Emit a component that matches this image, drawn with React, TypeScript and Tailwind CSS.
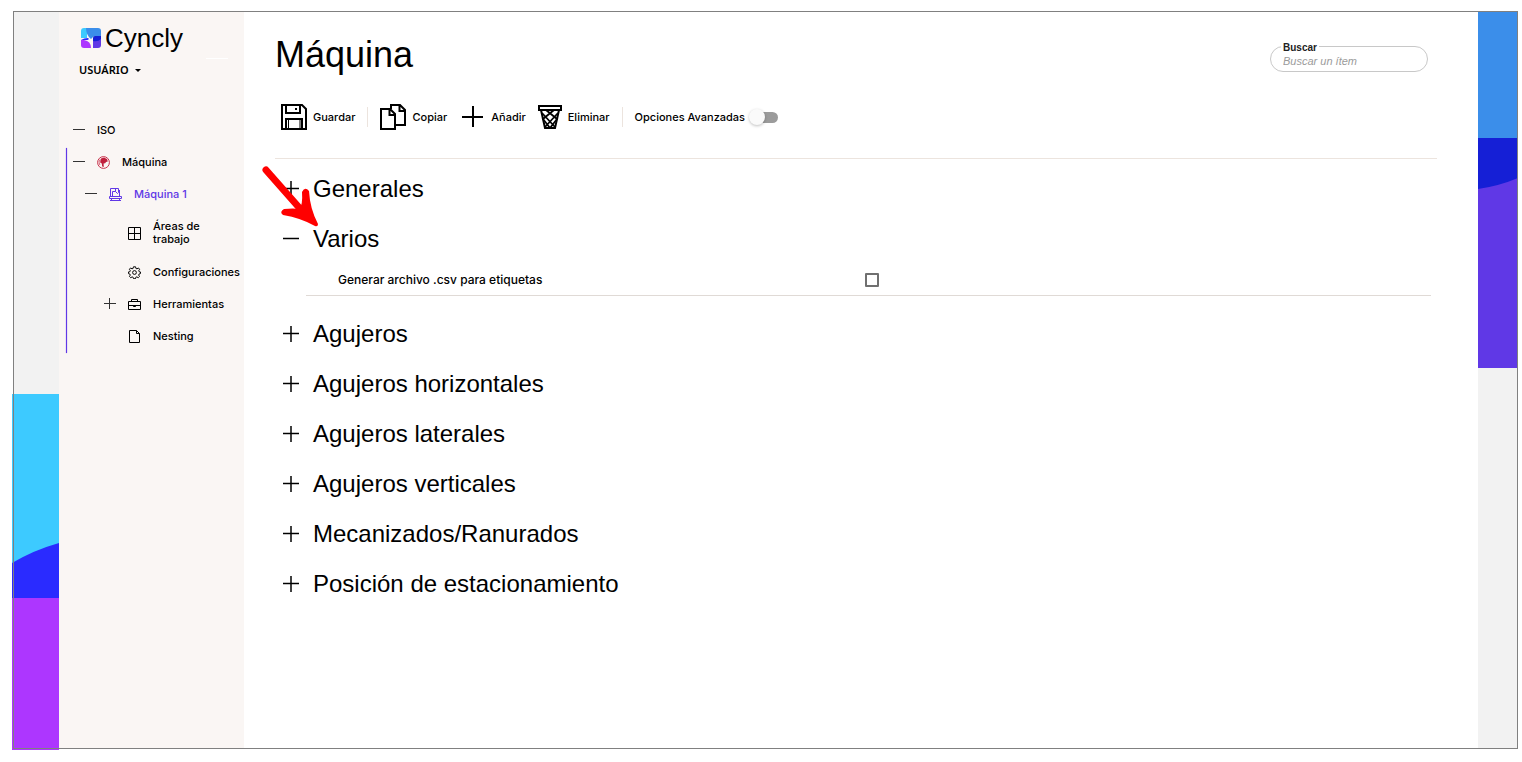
import type { ReactNode } from 'react'

const sections = [
  'Agujeros',
  'Agujeros horizontales',
  'Agujeros laterales',
  'Agujeros verticales',
  'Mecanizados/Ranurados',
  'Posición de estacionamiento',
]

function Toggle({ open, className = '' }: { open?: boolean; className?: string }) {
  return (
    <svg viewBox="0 0 12 12" className={`shrink-0 ${className}`} fill="none" stroke="currentColor" aria-hidden="true">
      <path d="M0 5.5h12" />
      {!open && <path d="M5.5 0v11" />}
    </svg>
  )
}

function LogoMark() {
  return (
    <svg viewBox="0 0 20 20" className="size-5" aria-hidden="true">
      <path d="M3 0h3v10H0V3q0-3 3-3z" fill="#3dcaff" />
      <path d="M5 0h12q3 0 3 3v5h-5q-3 0-5 3Q5 7 5 0z" fill="#3b8eea" />
      <path d="M0 12q3-2 7-2l1 1-1 1z" fill="#2a2bff" />
      <path d="M0 12h3q7 1 7 8H3q-3 0-3-3z" fill="#ad36ff" />
      <path d="M12 11h8v6q0 3-3 3h-5z" fill="#6038e6" />
      <path d="M14 8h6v3q-3 3-8 2v-3q0-2 2-2z" fill="#151fd6" />
      <path d="M6 12l6-1v7q-2-4-6-6z" fill="#faf6f4" />
    </svg>
  )
}

function MachineTypeIcon() {
  return (
    <svg viewBox="0 0 13 13" className="size-[13px] shrink-0" aria-hidden="true">
      <circle cx="6.5" cy="6.5" r="5.9" fill="none" stroke="#c8304a" />
      <path d="M4 2.5l3-1 3 1.6.8 2.4-1.8.4-.8 1.4-1.6.3.2 3.4-1.600-.5-.4-3-1.600-.9.2-2.200z" fill="#c01f3c" />
      <path d="M3 3.500L2 6l.8 3" fill="none" stroke="#c8304a" strokeWidth=".7" />
    </svg>
  )
}

function CncIcon() {
  return (
    <svg viewBox="0 0 13 13" className="size-[13px] shrink-0" fill="none" stroke="currentColor" aria-hidden="true">
      <path d="M1.5 8.5v-8h8v4l-1 1-2-2v-3M3.5 8.500v-5h3M10.500 2v6" />
      <path d="M.5 8.500h12v2H.5zM1 12.500h11M2.500 10.500v2M10.500 10.500v2" />
    </svg>
  )
}

function GridIcon() {
  return (
    <svg viewBox="0 0 13 13" className="size-[13px] shrink-0" fill="none" stroke="currentColor" aria-hidden="true">
      <path d="M.5.5h12v12H.5zM6.5.5v12M.5 6.5h12" />
    </svg>
  )
}

function GearIcon() {
  return (
    <svg viewBox="0 0 24 24" className="size-[13px] shrink-0" fill="none" stroke="currentColor" strokeWidth="1.8" aria-hidden="true">
      <path d="M10 1.5h4l.6 3 2 .8 2.600-1.700 2.200 2.400-1.500 2.600.8 2 2.300.4v3l-2.500.8-.8 2 1.500 2.500-2.300 2.300-2.600-1.500-1.900.8-.6 2.600h-3.600l-.7-2.600-1.900-.8-2.600 1.500-2.300-2.300 1.500-2.500-.8-2-2.600-.8v-3l2.600-.4.8-2L2.600 6l2.200-2.400 2.600 1.700 2-.8z" />
      <circle cx="12" cy="12" r="3.5" />
    </svg>
  )
}

function ToolboxIcon() {
  return (
    <svg viewBox="0 0 13 13" className="size-[13px] shrink-0" fill="none" stroke="currentColor" aria-hidden="true">
      <path d="M.5 3.5h12v8H.5zM3.5 3.500v-2h6v2M.5 7.500h12" />
      <path d="M5.500 7.500h2v1h-2z" fill="currentColor" />
    </svg>
  )
}

function PageIcon() {
  return (
    <svg viewBox="0 0 13 13" className="size-[13px] shrink-0" fill="none" stroke="currentColor" aria-hidden="true">
      <path d="M1.500.5h7l3 3v9h-10zM8.500.5v3h3" />
    </svg>
  )
}

function SaveIcon() {
  return (
    <svg viewBox="0 0 26 26" className="size-[26px]" fill="none" stroke="currentColor" strokeWidth="2" aria-hidden="true">
      <path d="M1 1h20l4 4v20H1zM5 1v8h14V1M5 25V15h16v10" />
      <path d="M7.500 16v9M19 16v9" strokeWidth="1" />
      <path d="M14 4h2v2h-2z" fill="currentColor" stroke="none" />
    </svg>
  )
}

function CopyIcon() {
  return (
    <svg viewBox="0 0 26 26" className="size-[26px]" fill="none" stroke="currentColor" strokeWidth="2" aria-hidden="true">
      <path d="M1 5h9l5 5v15H1zM9.500 5v6H15" />
      <path d="M11 5V1h9l5 5v15h-9.500M19.500 1v6H25" />
    </svg>
  )
}

function PlusIcon() {
  return (
    <svg viewBox="0 0 24 24" className="size-6" fill="none" stroke="currentColor" strokeWidth="2" aria-hidden="true">
      <path d="M1 12h21M12 1v21" />
    </svg>
  )
}

function TrashIcon() {
  return (
    <svg viewBox="0 0 24 24" className="size-6" fill="none" stroke="currentColor" strokeWidth="2" aria-hidden="true">
      <path d="M1 1h22v4H1zM3 5l4 18h10l4-18" />
      <path d="M8 5l11 9-7 9M16 5L5 14l7 9M4 8l13 14M20 8L7 22" strokeWidth="1.8" />
    </svg>
  )
}

type TreeRowProps = {
  label: string
  indent: string
  icon?: ReactNode
  toggle?: 'open' | 'closed'
  active?: boolean
  tall?: boolean
}

function TreeRow({ label, indent, icon, toggle, active, tall }: TreeRowProps) {
  return (
    <li className={`flex items-center gap-3 ${indent} ${tall ? 'h-[46px]' : 'h-8'} ${active ? 'text-[#6038e6]' : 'text-black'}`}>
      {toggle ? (
        <button type="button" aria-label={`Alternar ${label}`} className="text-[#333]">
          <Toggle open={toggle === 'open'} className="size-3" />
        </button>
      ) : (
        <span className="w-3 shrink-0" />
      )}
      {icon}
      <a href="#" className={`text-[11px] leading-[13px] font-medium ${tall ? 'w-16' : ''}`}>{label}</a>
    </li>
  )
}

function ToolButton({ icon, children }: { icon: ReactNode; children: ReactNode }) {
  return (
    <button type="button" className="flex items-center gap-1.5 text-[11px] font-medium">
      {icon}
      <span>{children}</span>
    </button>
  )
}

function SectionHeader({ title, open }: { title: string; open?: boolean }) {
  return (
    <h2 className="h-[50px]">
      <button type="button" aria-expanded={!!open} className="flex h-full items-center gap-3.5 pl-2 font-['Liberation_Sans',sans-serif] text-2xl">
        <svg viewBox="0 0 16 16" className="size-4" fill="none" stroke="currentColor" strokeWidth="1.5" aria-hidden="true">
          <path d="M0 7.500h16" />
          {!open && <path d="M8 0v16" />}
        </svg>
        {title}
      </button>
    </h2>
  )
}

function Sidebar() {
  return (
    <aside className="w-[185px] shrink-0 bg-[#faf6f4] pt-[13px]">
      <div className="flex items-center gap-1 pl-[22px]">
        <LogoMark />
        <span className="font-['Liberation_Sans',sans-serif] text-[26px] leading-7">Cyncly</span>
      </div>
      <button type="button" className="mt-2 ml-5 flex items-center gap-1.5 font-['Noto_Sans',sans-serif] text-[11px] leading-5 font-semibold">
        USUÁRIO
        <svg viewBox="0 0 6 3" className="h-[3px] w-1.5" aria-hidden="true">
          <path d="M0 0h6L3 3z" fill="currentColor" />
        </svg>
      </button>
      <div className="-mt-[22px] mr-4 ml-auto h-px w-[22px] bg-white" />
      <nav className="mt-[55px]">
        <ul>
          <TreeRow label="ISO" indent="pl-3.5" toggle="open" />
        </ul>
        <ul className="relative before:absolute before:top-0.5 before:-bottom-px before:left-[7px] before:w-px before:bg-[#6038e6] before:shadow-[0_0_1px_#6038e6]">
          <TreeRow label="Máquina" indent="pl-3.5" toggle="open" icon={<MachineTypeIcon />} />
          <TreeRow label="Máquina 1" indent="pl-[26px]" toggle="open" icon={<CncIcon />} active />
          <TreeRow label="Áreas de trabajo" indent="pl-[45px]" icon={<GridIcon />} tall />
          <TreeRow label="Configuraciones" indent="pl-[45px]" icon={<GearIcon />} />
          <TreeRow label="Herramientas" indent="pl-[45px]" toggle="closed" icon={<ToolboxIcon />} />
          <TreeRow label="Nesting" indent="pl-[45px]" icon={<PageIcon />} />
        </ul>
      </nav>
    </aside>
  )
}

function Toolbar() {
  return (
    <div className="flex h-[54px] items-center pl-1.5">
      <ToolButton icon={<SaveIcon />}>Guardar</ToolButton>
      <div className="mx-3 h-5 w-px bg-[#ece4de]" />
      <ToolButton icon={<CopyIcon />}>Copiar</ToolButton>
      <div className="w-3.5" />
      <ToolButton icon={<PlusIcon />}>Añadir</ToolButton>
      <div className="w-3" />
      <ToolButton icon={<TrashIcon />}>Eliminar</ToolButton>
      <div className="mx-3 h-5 w-px bg-[#ece4de]" />
      <label className="flex items-center gap-1 text-[11px] font-medium">
        Opciones Avanzadas
        <span className="relative flex h-4 w-[29px] items-center justify-end">
          <input type="checkbox" role="switch" className="peer absolute inset-0 opacity-0" />
          <span className="h-[11px] w-6 rounded-full bg-[#9b9b9b]" />
          <span className="absolute left-0 size-4 rounded-full bg-[#fafafa] shadow-[0_1px_3px_rgba(0,0,0,0.25)] peer-checked:left-3" />
        </span>
      </label>
    </div>
  )
}

export default function App() {
  return (
    <div className="flex min-h-screen bg-white pt-[11px] pr-1 pb-[13px] pl-[13px] font-['Inter',sans-serif] text-black">
      <div className="relative flex min-w-0 grow">
        {/* left brand strip */}
        <div className="flex w-[46px] shrink-0 flex-col justify-end bg-[#f2f2f2]">
          <svg viewBox="0 0 47 356" className="-mb-px -ml-px h-[356px] w-[47px]" aria-hidden="true">
            <path d="M0 0h47v204H0z" fill="#3dcaff" />
            <path d="M0 169q22-13 47-20v55H0z" fill="#2a2bff" />
            <path d="M0 204h47v152H0z" fill="#ad36ff" />
          </svg>
        </div>

        <Sidebar />

        <main className="relative min-w-0 grow pr-[41px] pl-[31px]">
          <header className="flex h-[66px] items-start justify-between pt-[22px] pr-[9px]">
            <h1 className="font-['Liberation_Sans',sans-serif] text-4xl leading-[44px]">Máquina</h1>
            <fieldset className="mt-1.5 h-[33px] w-[158px] rounded-full border border-[#c8c8c8] px-2.5 font-['Liberation_Sans',sans-serif]">
              <legend className="px-0.5 pt-1 text-[10px] leading-2.5 font-bold text-[#222]">
                <label htmlFor="buscar">Buscar</label>
              </legend>
              <input
                id="buscar"
                type="text"
                placeholder="Buscar un ítem"
                className="block h-4 w-full px-0.5 text-[11px] italic outline-none placeholder:text-[#9b9b9b]"
              />
            </fieldset>
          </header>

          <div className="mt-[13px] border-b border-[#ece4de] pb-[14px]">
            <Toolbar />
          </div>

          <div className="pt-[5px]">
            <SectionHeader title="Generales" />
            <SectionHeader title="Varios" open />
            <div className="mr-1.5 mb-[13px] ml-[31px] grid h-8 grid-cols-[49.7%_1fr] items-center border-b border-[#e0dad6]">
              <label htmlFor="csv" className="pl-8 text-xs font-medium">Generar archivo .csv para etiquetas</label>
              <input id="csv" type="checkbox" className="size-3.5 appearance-none rounded-[1px] border-2 border-[#707070] bg-white checked:bg-[#6038e6]" />
            </div>
            {sections.map((title) => (
              <SectionHeader key={title} title={title} />
            ))}
          </div>

          {/* pointer to the open section */}
          <svg viewBox="0 0 60 64" className="pointer-events-none absolute top-[154px] left-[17px] h-16 w-[60px]" aria-hidden="true">
            <path d="M5 5L42 47" stroke="#ff0000" strokeWidth="7" strokeLinecap="round" />
            <path d="M23 44Q33 43 38 44Q42 41 41 27Q44 21 48 26Q49 44 57 59Q57 62 54 61Q40 53 22 50Q18 47 23 44z" fill="#ff0000" />
          </svg>
        </main>

        {/* right brand strip */}
        <div className="w-10 shrink-0 bg-[#f2f2f2]">
          <svg viewBox="0 0 40 357" className="h-[357px] w-10" aria-hidden="true">
            <path d="M0 0h40v127H0z" fill="#3b8eea" />
            <path d="M0 127h40v55H0z" fill="#151fd6" />
            <path d="M0 178q21-3 40-11v190H0z" fill="#6038e6" />
          </svg>
        </div>

        <div className="pointer-events-none absolute inset-0 border border-[#808080]" />
      </div>
    </div>
  )
}
